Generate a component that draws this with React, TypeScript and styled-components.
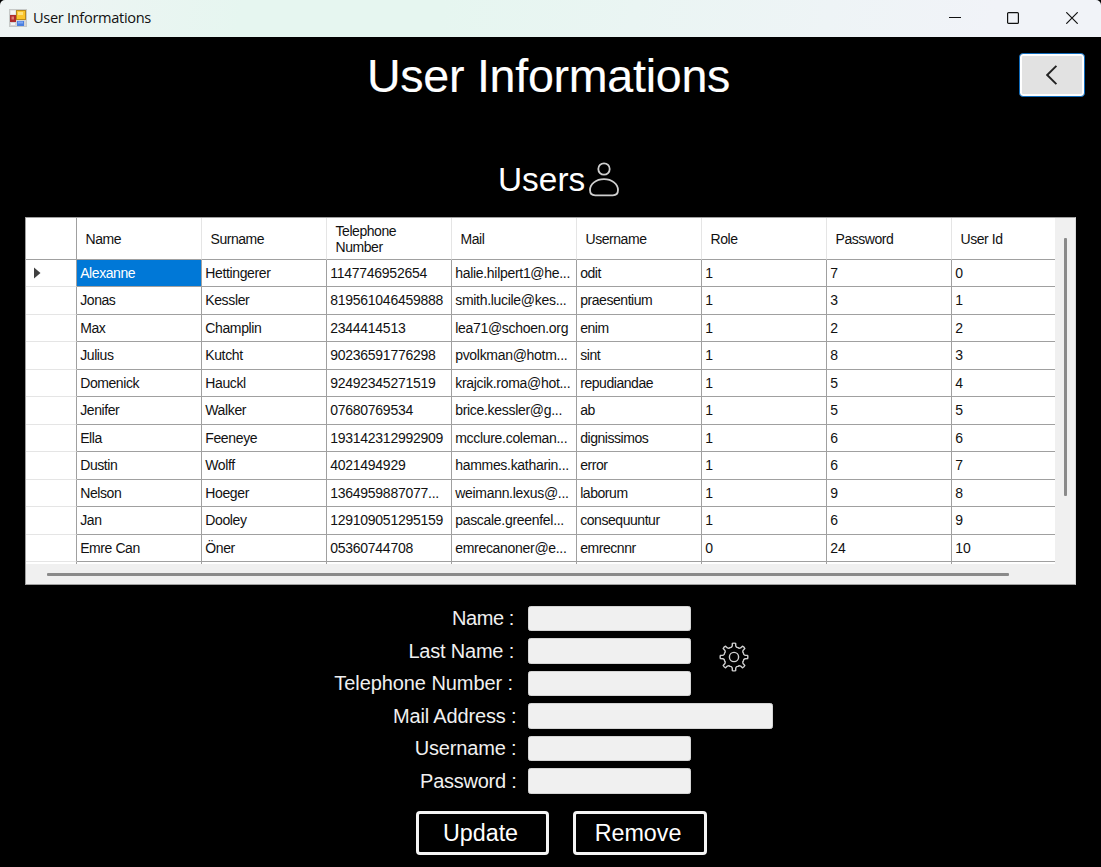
import React from 'react';
import styled, { createGlobalStyle } from 'styled-components';

const GlobalStyle = createGlobalStyle`
  * { box-sizing: border-box; }
  body { margin: 0; background: #000; overflow: hidden; }
`;

const Window = styled.div`
  width: 1101px;
  height: 867px;
  background: #000;
  color: #fff;
  font-family: 'Liberation Sans', Arial, sans-serif;
  overflow: hidden;
  display: flex;
  flex-direction: column;
`;

const TitleBar = styled.header`
  height: 37px;
  flex: none;
  display: flex;
  align-items: center;
  padding: 0 0 2px 9px;
  border-radius: 5px 5px 0 0;
  background: linear-gradient(100deg, #eff4f4 0%, #e6f6f0 22%, #e6f6f0 40%, #eef4f6 75%, #f1f3f8 90%);
`;

const AppTitle = styled.span`
  margin-left: 6px;
  flex: 1;
  height: 35px;
  line-height: 35px;
  font-family: 'Open Sans', 'Noto Sans', sans-serif;
  font-size: 14.6px;
  letter-spacing: -0.32px;
  color: #111;
`;

const WindowButton = styled.button`
  width: 58.5px;
  height: 35px;
  padding: 0;
  border: 0;
  background: none;
  display: flex;
  align-items: center;
  justify-content: center;
`;

const Heading = styled.div`
  height: 118px;
  flex: none;
  display: grid;
  grid-template-columns: 1fr auto 1fr;
  padding: 16px 16px 0 12px;
`;

const Title = styled.h1`
  grid-column: 2;
  margin: -3px 0 0;
  font-size: 46.6px;
  line-height: 52px;
  font-weight: 400;
  letter-spacing: -0.27px;
  -webkit-text-stroke: 0.15px #fff;
`;

const BackButton = styled.button`
  justify-self: end;
  width: 66px;
  height: 44px;
  padding: 0;
  border: 1.4px solid #0f6cbd;
  border-radius: 4px;
  background: #e2e2e2;
  box-shadow: inset 0 0 0 2px #fff;
  display: flex;
  align-items: center;
  justify-content: center;
`;

const SubHeading = styled.div`
  height: 62px;
  flex: none;
  display: flex;
  padding-left: 498px;
`;

const SubTitle = styled.h2`
  width: 87px;
  margin: 6px 0 0;
  overflow: hidden;
  font-size: 33.4px;
  line-height: 38px;
  height: 40px;
  font-weight: 400;
`;

const GridFrame = styled.section`
  width: 1051px;
  height: 368px;
  flex: none;
  margin-left: 25px;
  border: 1px solid #a0a0a0;
  border-right-color: #d8d8d8;
  background: #f0f0f0;
  display: grid;
  grid-template-columns: 1029px 1fr;
  grid-template-rows: 346px 1fr;
`;

const Viewport = styled.div`
  overflow: hidden;
  background: #fff;
`;

const Row = styled.div<{ $header?: boolean }>`
  display: grid;
  grid-template-columns: 51px repeat(8, 125px);
  width: 1051px;
  height: ${(p) => (p.$header ? '41.5px' : '27.5px')};
`;

const Cell = styled.div<{ $selected?: boolean; $ls?: number }>`
  border-right: 1px solid #a0a0a0;
  border-bottom: 1px solid #a0a0a0;
  padding-left: 3.2px;
  white-space: nowrap;
  overflow: hidden;
  font-size: 14px;
  line-height: 27px;
  letter-spacing: ${(p) => p.$ls ?? -0.35}px;
  color: ${(p) => (p.$selected ? '#fff' : '#111')};
  background: ${(p) => (p.$selected ? '#0078d7' : '#fff')};
`;

const HeaderCell = styled.div`
  display: flex;
  align-items: center;
  border-right: 1px solid #e5e5e5;
  border-bottom: 1px solid #a0a0a0;
  padding: 2px 30px 0 8.5px;
  font-size: 14px;
  line-height: 16px;
  letter-spacing: -0.45px;
  color: #111;
`;

const RowHeader = styled.div<{ $top?: boolean }>`
  display: flex;
  align-items: center;
  padding-left: 8px;
  border-right: 1px solid #a0a0a0;
  border-bottom: 1px solid ${(p) => (p.$top ? '#a0a0a0' : '#e5e5e5')};
`;

const VScroll = styled.div`
  padding: 20px 0 0 9px;
`;

const HScroll = styled.div`
  padding: 9px 0 0 21px;
`;

const Thumb = styled.div<{ $w: number; $h: number }>`
  width: ${(p) => p.$w}px;
  height: ${(p) => p.$h}px;
  border-radius: 1px;
  background: #8a8a8a;
`;

const Form = styled.form`
  margin-top: 18px;
  flex: none;
  display: grid;
  grid-template-columns: 528px 163px 82px;
  grid-auto-rows: 32.5px;
`;

const Label = styled.label<{ $end: number; $ls: number }>`
  grid-column: 1;
  padding: 0.4px ${(p) => 528 - p.$end}px 0 0;
  text-align: right;
  font-size: 20px;
  line-height: 31px;
  letter-spacing: ${(p) => p.$ls}px;
  color: #f0f0f0;
  white-space: nowrap;
`;

const Input = styled.input<{ $wide?: boolean }>`
  grid-column: ${(p) => (p.$wide ? '2 / 4' : '2')};
  width: 100%;
  height: 25.5px;
  margin: 2.5px 0 0;
  padding: 0 4px;
  border: 1px solid #d4d4d4;
  border-radius: 2.5px;
  background: #f0f0f0;
`;

const GearSlot = styled.div`
  grid-column: 3;
  grid-row: 2 / 4;
  padding: 6px 0 0 27.5px;
`;

const Actions = styled.div`
  display: flex;
  gap: 24px;
  margin: 13px 0 0 415.5px;
`;

const ActionButton = styled.button`
  width: 133.5px;
  height: 43.5px;
  padding: 0 3.5px 0 0;
  border: 3px solid #f4f4f4;
  border-radius: 4px;
  background: #000;
  color: #fff;
  font-family: inherit;
  font-size: 23.3px;
  line-height: 39px;
`;

const columns = ['Name', 'Surname', 'Telephone Number', 'Mail', 'Username', 'Role', 'Password', 'User Id'];

const users: string[][] = [
  ['Alexanne', 'Hettingerer', '1147746952654', 'halie.hilpert1@he...', 'odit', '1', '7', '0'],
  ['Jonas', 'Kessler', '819561046459888', 'smith.lucile@kes...', 'praesentium', '1', '3', '1'],
  ['Max', 'Champlin', '2344414513', 'lea71@schoen.org', 'enim', '1', '2', '2'],
  ['Julius', 'Kutcht', '90236591776298', 'pvolkman@hotm...', 'sint', '1', '8', '3'],
  ['Domenick', 'Hauckl', '92492345271519', 'krajcik.roma@hot...', 'repudiandae', '1', '5', '4'],
  ['Jenifer', 'Walker', '07680769534', 'brice.kessler@g...', 'ab', '1', '5', '5'],
  ['Ella', 'Feeneye', '193142312992909', 'mcclure.coleman...', 'dignissimos', '1', '6', '6'],
  ['Dustin', 'Wolff', '4021494929', 'hammes.katharin...', 'error', '1', '6', '7'],
  ['Nelson', 'Hoeger', '1364959887077...', 'weimann.lexus@...', 'laborum', '1', '9', '8'],
  ['Jan', 'Dooley', '129109051295159', 'pascale.greenfel...', 'consequuntur', '1', '6', '9'],
  ['Emre Can', 'Öner', '05360744708', 'emrecanoner@e...', 'emrecnnr', '0', '24', '10'],
  ['', '', '', '', '', '', '', ''],
];

const spacing = [-0.42, -0.35, -0.26, -0.3, -0.45, 0, 0, 0];

const fields = [
  { label: 'Name :', end: 514, ls: -0.4 },
  { label: 'Last Name :', end: 514, ls: -0.2 },
  { label: 'Telephone Number :', end: 513, ls: -0.08 },
  { label: 'Mail Address :', end: 516.5, ls: -0.15 },
  { label: 'Username :', end: 516.5, ls: -0.15 },
  { label: 'Password :', end: 516.5, ls: -0.25 },
];

const polar = (r: number, deg: number) => {
  const a = ((deg - 90) * Math.PI) / 180;
  return `${(15 + r * Math.cos(a)).toFixed(2)} ${(15 + r * Math.sin(a)).toFixed(2)}`;
};

const gearPath =
  Array.from({ length: 8 }, (_, k) => {
    const a = k * 45;
    return [
      `${k ? 'L' : 'M'}${polar(13.7, a - 7)}`,
      `Q${polar(14.2, a)} ${polar(13.7, a + 7)}`,
      `L${polar(11.2, a + 9)}`,
      `Q${polar(9.6, a + 14)} ${polar(10.2, a + 22.5)}`,
      `Q${polar(9.6, a + 31)} ${polar(11.2, a + 36)}`,
    ].join(' ');
  }).join(' ') + ' Z';

const AppIcon = () => (
  <svg width="18" height="18" viewBox="0 0 18 18">
    <rect x="0.5" y="0.5" width="17" height="17" fill="#d4d4d4" stroke="#c6c9c8" />
    <rect x="1.5" y="1.5" width="5" height="4" fill="#f6f6f6" />
    <rect x="2" y="14" width="4" height="2" fill="#f4f4f4" />
    <rect x="1" y="6" width="6" height="7" fill="#b02c2c" />
    <rect x="2.5" y="7.5" width="2.5" height="3" fill="#e07a70" />
    <rect x="7.5" y="1.5" width="9" height="9" fill="#fbc52c" stroke="#b98a1c" />
    <rect x="9" y="3" width="5" height="3" fill="#ffe27a" />
    <rect x="8" y="12" width="7" height="5" fill="#4a7fe0" />
    <rect x="9" y="12.5" width="5" height="2" fill="#7fa8f2" />
  </svg>
);

const UserGlyph = styled.svg`
  margin-top: 6px;
`;

const UserIcon = () => (
  <UserGlyph width="34" height="36" viewBox="0 0 34 36" fill="none" stroke="#cfcfcf" strokeWidth="1.8">
    <circle cx="19" cy="8" r="5.7" />
    <path d="M19 18.2c-8 0-14 4.8-14 10.8 0 3.2 2 5.3 5.2 5.3h17.6c3.2 0 5.2-2.1 5.2-5.3 0-6-6-10.8-14-10.8z" />
  </UserGlyph>
);

export default function App() {
  return (
    <>
      <GlobalStyle />
      <Window>
        <TitleBar>
          <AppIcon />
          <AppTitle>User Informations</AppTitle>
          <WindowButton aria-label="Minimize">
            <svg width="12" height="12"><path d="M0 5.5h12" stroke="#111" /></svg>
          </WindowButton>
          <WindowButton aria-label="Maximize">
            <svg width="12" height="12"><rect x="0.6" y="0.6" width="10.8" height="10.8" rx="1" fill="none" stroke="#111" strokeWidth="1.2" /></svg>
          </WindowButton>
          <WindowButton aria-label="Close">
            <svg width="12" height="12"><path d="M0.3 0.3l11.4 11.4M11.7 0.3L0.3 11.7" stroke="#111" strokeWidth="1.2" /></svg>
          </WindowButton>
        </TitleBar>

        <Heading>
          <Title>User Informations</Title>
          <BackButton aria-label="Back">
            <svg width="12" height="20" viewBox="0 0 12 20" fill="none" stroke="#222" strokeWidth="1.9">
              <path d="M10.4 0.8L1.2 10l9.2 9.2" />
            </svg>
          </BackButton>
        </Heading>

        <SubHeading>
          <SubTitle>Users</SubTitle>
          <UserIcon />
        </SubHeading>

        <GridFrame>
          <Viewport>
            <Row $header>
              <RowHeader $top />
              {columns.map((c) => (
                <HeaderCell key={c}>{c}</HeaderCell>
              ))}
            </Row>
            {users.map((u, r) => (
              <Row key={r}>
                <RowHeader>
                  {r === 0 && (
                    <svg width="7" height="12"><path d="M0 0.5L6.5 6L0 11.5z" fill="#404040" /></svg>
                  )}
                </RowHeader>
                {u.map((v, c) => (
                  <Cell key={c} $selected={r === 0 && c === 0} $ls={spacing[c]}>{v}</Cell>
                ))}
              </Row>
            ))}
          </Viewport>
          <VScroll><Thumb $w={3} $h={258} /></VScroll>
          <HScroll><Thumb $w={962} $h={2.5} /></HScroll>
        </GridFrame>

        <Form>
          {fields.map((f, i) => (
            <React.Fragment key={f.label}>
              <Label $end={f.end} $ls={f.ls} style={{ gridRow: i + 1 }}>{f.label}</Label>
              <Input $wide={i === 3} style={{ gridRow: i + 1 }} aria-label={f.label} />
            </React.Fragment>
          ))}
          <GearSlot>
            <svg width="30" height="30" viewBox="0 0 30 30" fill="none" stroke="#d0d0d0" strokeWidth="1.4" strokeLinejoin="round">
              <path d={gearPath} />
              <circle cx="15" cy="15" r="4.6" />
            </svg>
          </GearSlot>
        </Form>

        <Actions>
          <ActionButton>Update</ActionButton>
          <ActionButton>Remove</ActionButton>
        </Actions>
      </Window>
    </>
  );
}
